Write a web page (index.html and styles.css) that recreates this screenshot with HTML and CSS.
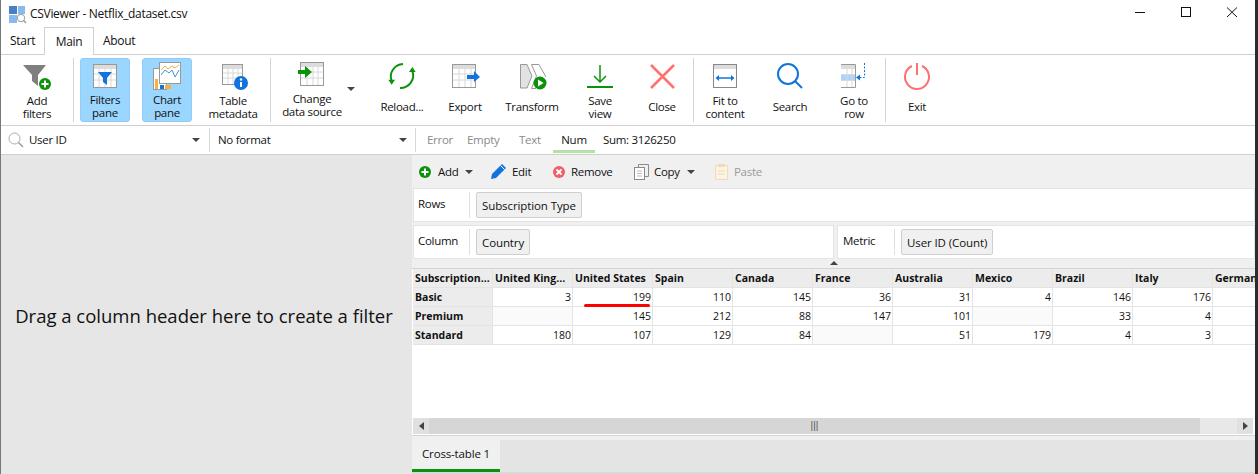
FILE: index.html
```html
<!DOCTYPE html>
<html lang="en">
<head>
<meta charset="utf-8">
<title>CSViewer - Netflix_dataset.csv</title>
<link rel="stylesheet" href="styles.css">
</head>
<body>
<div class="window">
  <header class="titlebar">
    <svg class="app-icon" width="18" height="18" viewBox="0 0 18 18"><rect x="0" y="0" width="8" height="8" fill="#4a7fc4"/><rect x="9" y="0" width="7" height="8" fill="#86bbee"/><rect x="0" y="9" width="8" height="8" fill="#86bbee"/><circle cx="12" cy="12" r="3.6" fill="#fff" stroke="#a8a8a8" stroke-width="1.2"/><path d="M14.6 14.6L17 17" stroke="#999" stroke-width="1.4"/></svg>
    <span class="app-title">CSViewer - Netflix_dataset.csv</span>
    <div class="win-controls">
      <svg width="12" height="12" viewBox="0 0 12 12"><path d="M1 6.5H11" stroke="#111" stroke-width="1"/></svg>
      <svg width="12" height="12" viewBox="0 0 12 12"><rect x="1.5" y="1.5" width="9" height="9" fill="none" stroke="#111"/></svg>
      <svg width="12" height="12" viewBox="0 0 12 12"><path d="M1 1.5L11 11M11 1.5L1 11" stroke="#111" stroke-width="1"/></svg>
    </div>
  </header>

  <nav class="tabs">
    <span class="tab">Start</span>
    <span class="tab tab-active">Main</span>
    <span class="tab">About</span>
  </nav>

  <section class="ribbon">
    <div class="rb rb-add">
      <svg width="32" height="30" viewBox="0 0 32 30"><path d="M2 4H25L17 14V25L11 20V14Z" fill="#7f7f7f"/><circle cx="24" cy="23" r="6" fill="#0a930a"/><path d="M20.5 23H27.5M24 19.5V26.5" stroke="#fff" stroke-width="2"/></svg>
      <span class="rb-label">Add<br>filters</span>
    </div>
    <i class="rb-sep sep-a"></i>
    <div class="rb rb-filters rb-on">
      <svg width="32" height="30" viewBox="0 0 32 30"><rect x="4.500" y="3.500" width="23" height="23" fill="#fff" stroke="#999"/><rect x="5" y="4" width="22" height="4" fill="#dcdcdc"/><path d="M5 13H27M5 19H27M10 8V26M16 8V26M22 8V26" stroke="#d8d8d8"/><path d="M9 11H23L18 17V24L14 21V17Z" fill="#1273de"/></svg>
      <span class="rb-label">Filters<br>pane</span>
    </div>
    <div class="rb rb-chart rb-on">
      <svg width="32" height="30" viewBox="0 0 32 30"><rect x="2.500" y="7.500" width="13" height="21" fill="#fff" stroke="#999"/><rect x="4" y="18" width="3" height="10" fill="#f5b041"/><rect x="9" y="24" width="4" height="4" fill="#1273de"/><rect x="14" y="24" width="6" height="4" fill="#f5b041"/><rect x="8.500" y="1.500" width="21" height="21" fill="#fff" stroke="#999"/><path d="M10 9L14 5L17 8L21 5L24 7L28 4" fill="none" stroke="#f5b041"/><path d="M10 14L14 9L18 12L21 9L24 16L28 9" fill="none" stroke="#4a90d9"/></svg>
      <span class="rb-label">Chart<br>pane</span>
    </div>
    <div class="rb rb-meta">
      <svg width="32" height="30" viewBox="0 0 32 30"><rect x="5.500" y="3.500" width="20" height="20" fill="#fff" stroke="#999"/><rect x="6" y="4" width="19" height="4" fill="#dcdcdc"/><path d="M6 12H25M6 17H25M11 8V23M16 8V23M21 8V23" stroke="#d8d8d8"/><circle cx="24" cy="22" r="7" fill="#1273de"/><path d="M24 21V26" stroke="#fff" stroke-width="2"/><circle cx="24" cy="18.500" r="1.200" fill="#fff"/></svg>
      <span class="rb-label">Table<br>metadata</span>
    </div>
    <i class="rb-sep sep-b"></i>
    <div class="rb rb-source">
      <svg width="32" height="30" viewBox="0 0 32 30"><rect x="4.500" y="2.500" width="23" height="23" fill="#fff" stroke="#999"/><rect x="5" y="3" width="22" height="4" fill="#dcdcdc"/><path d="M5 12H27M5 18H27M11 7V25M17 7V25M22 7V25" stroke="#d8d8d8"/><path d="M2 10H9V6L16 12L9 18V14H2Z" fill="#0a930a"/></svg>
      <span class="rb-label">Change<br>data source</span>
    </div>
    <i class="caret caret-source"></i>
    <div class="rb rb-reload">
      <svg width="32" height="30" viewBox="0 0 32 30"><path d="M17 3A13 12.500 0 0 0 5.700 20" fill="none" stroke="#0a930a" stroke-width="2"/><path d="M2.300 18.700H9L5.700 23.700Z" fill="#0a930a"/><path d="M14 27A13 12.500 0 0 0 26.300 10" fill="none" stroke="#0a930a" stroke-width="2"/><path d="M23 11H29.700L26.300 6Z" fill="#0a930a"/></svg>
      <span class="rb-label">Reload...</span>
    </div>
    <div class="rb rb-export">
      <svg width="32" height="30" viewBox="0 0 32 30"><rect x="3.500" y="3.500" width="23" height="23" fill="#fff" stroke="#999"/><rect x="4" y="4" width="22" height="4" fill="#dcdcdc"/><path d="M4 13H26M4 19H26M10 8V26M16 8V26M22 8V26" stroke="#d8d8d8"/><path d="M18 14H25V10L31 16L25 21V18H18Z" fill="#1273de"/></svg>
      <span class="rb-label">Export</span>
    </div>
    <div class="rb rb-transform">
      <svg width="32" height="30" viewBox="0 0 32 30"><path d="M4.500 3.500H11L16 15L11 27H4.500Z" fill="#e2e2e2" stroke="#999"/><path d="M15.500 3.500H23L30 16M15.500 3.500L20.500 15L15.500 27.500H20" fill="none" stroke="#999"/><circle cx="24" cy="22" r="6.500" fill="#0a930a"/><path d="M22 18.500V25.500L27.500 22Z" fill="#fff"/></svg>
      <span class="rb-label">Transform</span>
    </div>
    <div class="rb rb-save">
      <svg width="32" height="30" viewBox="0 0 32 30"><path d="M16 4V21M10 15L16 21L22 15" fill="none" stroke="#0a930a" stroke-width="1.500"/><path d="M3 26H29" stroke="#0a930a" stroke-width="2"/></svg>
      <span class="rb-label">Save<br>view</span>
    </div>
    <div class="rb rb-close">
      <svg width="32" height="30" viewBox="0 0 32 30"><path d="M5 4L28 27M28 4L5 27" stroke="#ff7070" stroke-width="2.500"/></svg>
      <span class="rb-label">Close</span>
    </div>
    <i class="rb-sep sep-c"></i>
    <div class="rb rb-fit">
      <svg width="32" height="30" viewBox="0 0 32 30"><rect x="4.500" y="3.500" width="23" height="23" fill="#fff" stroke="#888"/><rect x="5" y="4" width="22" height="4" fill="#dcdcdc"/><path d="M10 17H22" stroke="#1273de" stroke-width="1.500"/><path d="M10 14V20L6.500 17ZM22 14V20L25.500 17Z" fill="#1273de"/></svg>
      <span class="rb-label">Fit to<br>content</span>
    </div>
    <div class="rb rb-search">
      <svg width="32" height="30" viewBox="0 0 32 30"><circle cx="14" cy="13" r="10" fill="none" stroke="#1273de" stroke-width="2"/><path d="M21 20L28 27" stroke="#1273de" stroke-width="2"/></svg>
      <span class="rb-label">Search</span>
    </div>
    <div class="rb rb-goto">
      <svg width="32" height="30" viewBox="0 0 32 30"><path d="M3 3.500H17.500V26.500H3" fill="#fff" stroke="#999"/><rect x="3" y="4" width="14" height="4" fill="#dcdcdc"/><rect x="3" y="14" width="14" height="5" fill="#a9d4fb"/><path d="M3 13.500H17M3 19.500H17M9 8V26M14 8V26" stroke="#d8d8d8"/><path d="M26.500 2V16.500H20" fill="none" stroke="#1273de" stroke-dasharray="2 1.500"/><path d="M22 13.500V19.500L18 16.500Z" fill="#1273de"/></svg>
      <span class="rb-label">Go to<br>row</span>
    </div>
    <i class="rb-sep sep-d"></i>
    <div class="rb rb-exit">
      <svg width="32" height="30" viewBox="0 0 32 30"><path d="M11 5A12 12 0 1 0 21 5" fill="none" stroke="#ff7070" stroke-width="2"/><path d="M16 2V14" stroke="#ff7070" stroke-width="2"/></svg>
      <span class="rb-label">Exit</span>
    </div>
  </section>

  <section class="filterbar">
    <div class="fb-select fb-column">
      <svg width="16" height="16" viewBox="0 0 16 16"><circle cx="6.500" cy="6.500" r="5.500" fill="none" stroke="#aaa"/><path d="M10.500 10.500L15 15" stroke="#999" stroke-width="1.400"/></svg>
      <span class="fb-value">User ID</span>
      <i class="caret"></i>
    </div>
    <div class="fb-select fb-format">
      <span class="fb-value">No format</span>
      <i class="caret"></i>
    </div>
    <div class="fb-stats">
      <span class="stat stat-error">Error</span>
      <span class="stat stat-empty">Empty</span>
      <span class="stat stat-text">Text</span>
      <span class="stat stat-num">Num</span>
      <span class="sum">Sum: 3126250</span>
    </div>
  </section>

  <main class="body">
    <aside class="filters-pane">Drag a column header here to create a filter</aside>
    <div class="content">
      <div class="toolbar">
        <span class="tool tool-add"><svg width="14" height="14" viewBox="0 0 14 14"><circle cx="7" cy="7" r="6" fill="#0a930a"/><path d="M3.500 7H10.500M7 3.500V10.500" stroke="#fff" stroke-width="2"/></svg>Add<i class="caret"></i></span>
        <span class="tool tool-edit"><svg width="17" height="17" viewBox="0 0 17 17"><path d="M1 16L2 11L12 1L16 5L6 15Z" fill="#1273de"/><path d="M10.500 2.500L14.500 6.500" stroke="#fff"/></svg>Edit</span>
        <span class="tool tool-remove"><svg width="14" height="14" viewBox="0 0 14 14"><circle cx="7" cy="7" r="6" fill="#ee5f6b"/><path d="M4.500 4.500L9.500 9.500M9.500 4.500L4.500 9.500" stroke="#fff" stroke-width="1.800"/></svg>Remove</span>
        <span class="tool tool-copy"><svg width="15" height="16" viewBox="0 0 15 16"><path d="M4.500 3.500V.5H14.500V12.500H10.500" fill="none" stroke="#8a8a8a"/><rect x=".5" y="3.500" width="10" height="12" fill="#fff" stroke="#8a8a8a"/><path d="M3 7H8M3 9.500H8M3 12H8" stroke="#bbb"/></svg>Copy<i class="caret"></i></span>
        <span class="tool tool-paste"><svg width="13" height="16" viewBox="0 0 13 16"><rect x=".5" y="1.500" width="12" height="14" fill="#fbf3e4" stroke="#f0dcb8"/><rect x="3" y="0" width="7" height="3" fill="#f0dcb8"/><path d="M3 7H10M3 10H10" stroke="#f0dcb8"/></svg>Paste</span>
      </div>

      <div class="drop drop-rows">
        <span class="drop-label">Rows</span>
        <span class="chip">Subscription Type</span>
      </div>
      <div class="drop-line">
        <div class="drop drop-column">
          <span class="drop-label">Column</span>
          <span class="chip">Country</span>
        </div>
        <div class="drop drop-metric">
          <span class="drop-label">Metric</span>
          <span class="chip">User ID (Count)</span>
        </div>
      </div>

      <div class="split-handle"><i class="split-arrow"></i></div>

      <div class="grid-wrap">
        <div class="grid-scroll">
          <table class="grid">
            <thead>
              <tr><th>Subscription...</th><th>United King...</th><th>United States</th><th>Spain</th><th>Canada</th><th>France</th><th>Australia</th><th>Mexico</th><th>Brazil</th><th>Italy</th><th>Germany</th></tr>
            </thead>
            <tbody>
              <tr><th>Basic</th><td>3</td><td class="marked">199<i class="red-mark"></i></td><td>110</td><td>145</td><td>36</td><td>31</td><td>4</td><td>146</td><td>176</td><td></td></tr>
              <tr><th>Premium</th><td class="blank"></td><td>145</td><td>212</td><td>88</td><td>147</td><td>101</td><td class="blank"></td><td>33</td><td>4</td><td></td></tr>
              <tr><th>Standard</th><td>180</td><td>107</td><td>129</td><td>84</td><td class="blank"></td><td>51</td><td>179</td><td>4</td><td>3</td><td></td></tr>
            </tbody>
          </table>
        </div>
        <div class="hscroll">
          <span class="sb-btn"><i class="sb-left"></i></span>
          <span class="sb-thumb">|||</span>
          <span class="sb-rest"></span>
          <span class="sb-btn"><i class="sb-right"></i></span>
        </div>
      </div>

      <div class="sheet-tabs">
        <span class="sheet-tab">Cross-table 1</span>
      </div>
    </div>
  </main>
</div>
</body>
</html>
```
FILE: styles.css
```css
* { box-sizing: border-box; }
html, body { margin: 0; padding: 0; }
body {
  width: 1258px;
  height: 474px;
  overflow: hidden;
  background: #fff;
  font-family: "Open Sans", "Noto Sans", sans-serif;
  font-size: 11.5px;
  letter-spacing: -0.3px;
  color: #111;
}
.window {
  width: 1258px;
  height: 474px;
  border-left: 1px solid #777;
  border-right: 3px solid #2b2b2e;
  display: flex;
  flex-direction: column;
  background: #fff;
}

/* title bar */
.titlebar { height: 27px; display: flex; align-items: center; padding-left: 8px; flex: none; }
.app-icon { margin-right: 3px; margin-top: 2px; }
.app-title { font-size: 12px; }
.win-controls { margin-left: auto; display: flex; gap: 34px; padding-right: 17px; margin-top: -3px; }

/* tabs */
.tabs { height: 28px; display: flex; flex: none; border-bottom: 1px solid #d0d0d0; align-items: flex-end; }
.tab { height: 27px; line-height: 27px; padding: 0 9px; font-size: 12px; }
.tab:first-child { width: 43px; }
.tab-active { width: 50px; padding: 0; text-align: center; background: #fff; border: 1px solid #d0d0d0; border-bottom: 0; height: 28px; margin-bottom: -1px; }

/* ribbon */
.ribbon { height: 71px; flex: none; display: flex; padding-top: 3px; padding-bottom: 3px; align-items: stretch; border-bottom: 1px solid #d0d0d0; }
.rb { display: flex; flex-direction: column; align-items: center; flex: none; padding-top: 3px; }
.rb svg { display: block; flex: none; }
.rb-label { flex: 1; display: flex; align-items: center; justify-content: center; text-align: center; line-height: 13px; white-space: nowrap; }
.rb-on { background: #9bd6ff; border: 1px solid #8fcdf8; border-radius: 3px; padding-top: 2px; }
.rb-sep { flex: none; width: 1px; background: #d4d4d4; }
.rb-add { width: 60px; margin-left: 6px; }
.sep-a { margin-left: 6px; }
.rb-filters { width: 50px; margin-left: 6px; }
.rb-chart { width: 50px; margin-left: 12px; }
.rb-meta { width: 66px; margin-left: 8px; }
.sep-b { margin-left: 4px; }
.rb-source { width: 76px; margin-left: 3px; padding-top: 2px; }
.rb-source .rb-label { padding-bottom: 3px; }
.caret-source { align-self: flex-start; margin-top: 29px; margin-left: -3px; }
.rb-reload { width: 56px; margin-left: 19px; }
.rb-export { width: 50px; margin-left: 10px; }
.rb-transform { width: 64px; margin-left: 10px; }
.rb-save { width: 44px; margin-left: 14px; }
.rb-close { width: 44px; margin-left: 18px; }
.sep-c { margin-left: 9px; }
.rb-fit { width: 52px; margin-left: 5px; }
.rb-search { width: 50px; margin-left: 14px; }
.rb-goto { width: 44px; margin-left: 17px; }
.sep-d { margin-left: 9px; }
.rb-exit { width: 40px; margin-left: 11px; }

.caret { display: inline-block; width: 0; height: 0; border-left: 4px solid transparent; border-right: 4px solid transparent; border-top: 4px solid #444; flex: none; }

/* filter bar */
.filterbar { height: 29px; flex: none; display: flex; border-bottom: 1px solid #d0d0d0; align-items: center; padding-bottom: 1px; }
.fb-select { display: flex; align-items: center; height: 24px; border-right: 1px solid #d8d8d8; }
.fb-column { width: 209px; padding: 0 9px 0 7px; }
.fb-column svg { margin-right: 5px; }
.fb-format { width: 206px; padding: 0 8px 0 8px; }
.fb-value { flex: 1; }
.fb-stats { display: flex; align-items: center; height: 27px; margin-left: 11px; }
.stat { color: #8a8a8a; }
.stat-error { width: 40px; }
.stat-empty { width: 52px; }
.stat-text { width: 34px; }
.stat-num { width: 42px; height: 26px; line-height: 26px; text-align: center; color: #111; border-bottom: 3px solid #b1e2a8; }
.sum { margin-left: 8px; }

/* body */
.body { flex: 1; display: flex; min-height: 0; }
.filters-pane { width: 411px; flex: none; background: #e6e6e6; display: flex; align-items: center; justify-content: center; font-size: 18.500px; letter-spacing: 0; padding: 1px 5px 0 0; white-space: nowrap; }
.content { flex: 1; min-width: 0; background: #f0f0f0; display: flex; flex-direction: column; }

.toolbar { height: 33px; flex: none; display: flex; align-items: center; padding-left: 6px; }
.tool { display: flex; align-items: center; }
.tool-add { width: 72px; }
.tool-add svg { margin-right: 6px; }
.tool-add .caret, .tool-copy .caret { margin-left: 7px; }
.tool-edit { width: 62px; }
.tool-edit svg { margin-right: 5px; }
.tool-remove { width: 82px; }
.tool-remove svg { margin-right: 5px; }
.tool-copy { width: 81px; }
.tool-copy svg { margin-right: 5px; }
.tool-paste { color: #9a9a9a; }
.tool-paste svg { margin-right: 6px; }

.drop { background: #fff; border: 1px solid #e4e4e4; display: flex; align-items: center; height: 34px; padding-left: 4px; }
.drop-rows { margin-left: 1px; flex: none; }
.drop-label { border-right: 1px solid #e0e0e0; height: 26px; line-height: 24px; margin-right: 6px; width: 52px; flex: none; }
.chip { background: #f0f0f0; border: 1px solid #cfcfcf; border-radius: 2px; height: 26px; line-height: 25px; padding: 0 5px; letter-spacing: -0.1px; }
.drop-line { display: flex; gap: 3px; margin: 3px 0 0 1px; flex: none; }
.drop-column { width: 421px; flex: none; }
.drop-metric { flex: 1; padding-left: 5px; }
.split-handle { height: 9px; flex: none; position: relative; }
.split-arrow { position: absolute; left: 418px; top: 2px; width: 0; height: 0; border-left: 4px solid transparent; border-right: 4px solid transparent; border-bottom: 4px solid #444; }

.grid-wrap { flex: none; height: 168px; border: 1px solid #d4d4d4; border-width: 1px 0 1px 0; background: #fff; display: flex; flex-direction: column; }
.grid-scroll { flex: 1; overflow: hidden; min-height: 0; padding-left: 1px; }
.grid { border-collapse: separate; border-spacing: 0; table-layout: fixed; width: 880px; font-size: 10.500px; letter-spacing: 0; }
.grid th, .grid td { width: 80px; overflow: hidden; white-space: nowrap; padding: 0 1px 0 2px; border-right: 1px solid #e4e4e4; border-bottom: 1px solid #e4e4e4; height: 19px; }
.grid thead th { height: 19px; background: #ececec; text-align: left; font-weight: 700; }
.grid tbody th { background: #ececec; text-align: left; font-weight: 700; }
.grid td { text-align: right; background: #fff; }
.grid td.blank { background: #fafafa; }
.grid td.marked { position: relative; overflow: visible; }
.red-mark { position: absolute; left: 11px; right: 2px; bottom: -1px; height: 3px; background: #f00; border-radius: 2px; }

.hscroll { height: 16px; flex: none; display: flex; background: #e8e8e8; margin: 0 2px 1px 1px; }
.sb-btn { width: 16px; background: #e0e0e0; display: flex; align-items: center; justify-content: center; flex: none; }
.sb-left, .sb-right { width: 0; height: 0; border-top: 4px solid transparent; border-bottom: 4px solid transparent; }
.sb-left { border-right: 5px solid #444; }
.sb-right { border-left: 5px solid #444; }
.sb-thumb { width: 771px; flex: none; background: #d6d6d6; text-align: center; line-height: 15px; font-size: 10px; letter-spacing: 0; color: #555; font-family: "Liberation Sans", sans-serif; }
.sb-rest { flex: 1; }

.sheet-tabs { flex: 1; background: #e4e4e4; display: flex; margin-top: 4px; border-bottom: 2px solid #d8d8d8; }
.sheet-tab { width: 88px; background: #f0f0f0; text-align: center; line-height: 28px; letter-spacing: -0.15px; border-bottom: 3px solid #0a930a; height: 32px; }
```
